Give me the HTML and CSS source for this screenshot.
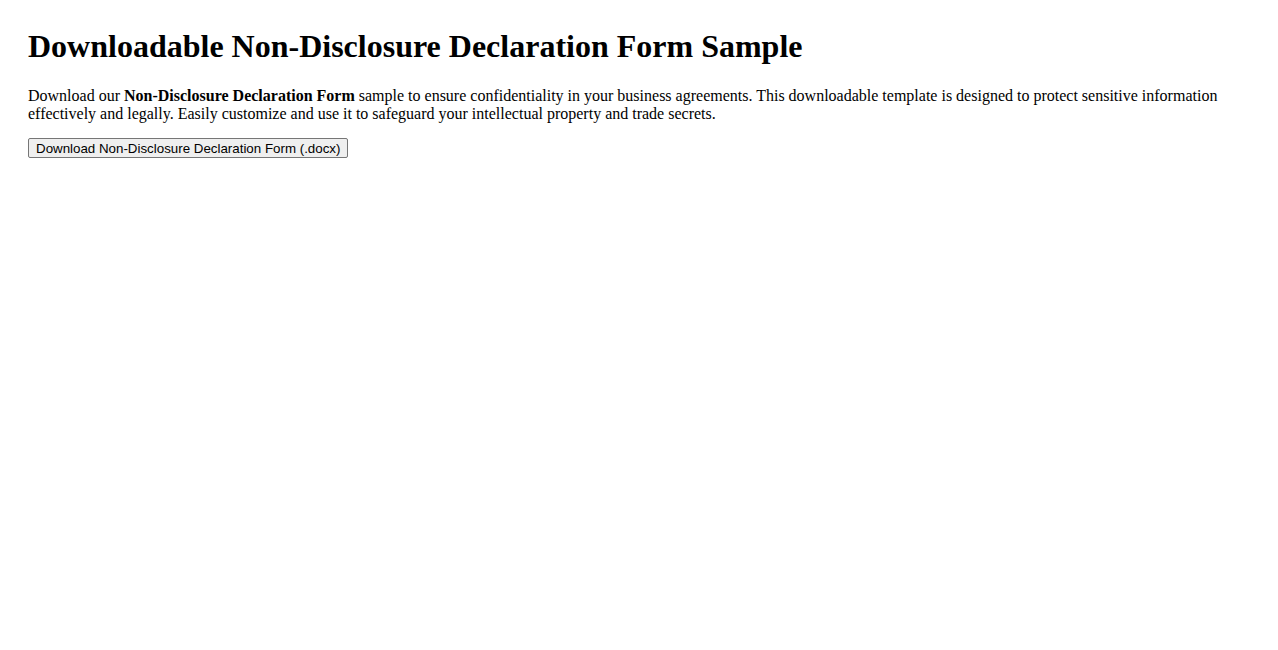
FILE: index.html
```html
<!DOCTYPE html>
<html lang="en">
<head>
  <meta charset="UTF-8" />
  <meta name="viewport" content="width=device-width, initial-scale=1.0"/>
  <title>Non-Disclosure Declaration Form Sample</title>
  <link rel="stylesheet" href="styles.css">
</head>
<body>

<div class="page">
  <h1 class="title">Downloadable Non-Disclosure Declaration Form Sample</h1>
  <p class="intro">
    Download our <strong>Non-Disclosure Declaration Form</strong> sample to ensure confidentiality in your business agreements. This downloadable template is designed to protect sensitive information effectively and legally. Easily customize and use it to safeguard your intellectual property and trade secrets.
  </p>
  <button class="download-btn" type="button">Download Non-Disclosure Declaration Form (.docx)</button>
</div>

</body>
</html>
```

FILE: styles.css
```css
body {
  margin: 0;
  font-family: 'Liberation Serif', 'Times New Roman', serif;
  color: #000;
  background: #fff;
}

.page {
  padding: 28px;
}

.title {
  margin: 0 0 22px;
  font-size: 32px;
  font-weight: bold;
}

.intro {
  margin: 0 0 15px;
  font-size: 16px;
}

.download-btn {
  font-family: 'Liberation Sans', Arial, sans-serif;
  font-size: 13.33px;
  padding: 2px 7px 1px;
  color: #000;
  background-color: #efefef;
  border: 1px solid #767676;
  border-radius: 2px;
  cursor: pointer;
}

.download-btn:hover {
  background-color: #e5e5e5;
}
```
